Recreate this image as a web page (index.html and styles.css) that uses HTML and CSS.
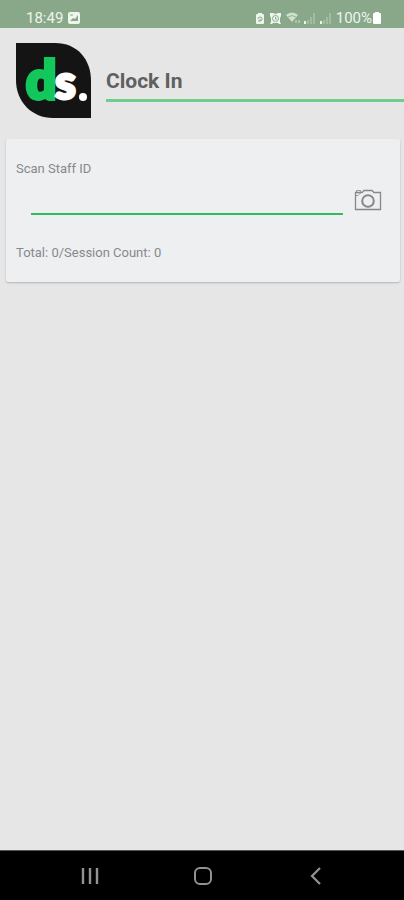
FILE: index.html
```html
<!DOCTYPE html>
<html lang="en">
<head>
<meta charset="utf-8">
<meta name="viewport" content="width=device-width, initial-scale=1">
<title>Clock In</title>
<link rel="stylesheet" href="styles.css">
</head>
<body>
<div class="status">
  <div class="status-group">
    <span>18:49</span>
    <svg width="12" height="12" viewBox="0 0 12 12" aria-hidden="true"><rect width="12" height="12" rx="2" fill="#edf5ed"/><path d="M2 9l3-3 2 1 3-4v6z" fill="#89a889"/><path d="M2 3h3" stroke="#89a889"/></svg>
  </div>
  <div class="status-group status-right">
    <svg width="10" height="13" viewBox="0 0 10 13" aria-hidden="true"><path d="M3 1h4v1h1q1 0 1 1v8q0 1-1 1H2q-1 0-1-1V3q0-1 1-1h1z" fill="#edf5ed"/><path d="M3 7a2 2 0 1 1 2 2M3 9h2V7" fill="none" stroke="#89a889"/></svg>
    <svg width="13" height="13" viewBox="0 0 13 13" aria-hidden="true"><path d="M1 1h3l2.500 1L9 1h3v3l-1 2v4l1 2h-2l-1-1H4l-1 1H1l1-2V6L1 4z" fill="#edf5ed"/><circle cx="6.500" cy="6.500" r="3" fill="none" stroke="#89a889"/><path d="M6.500 5v2H8" fill="none" stroke="#89a889"/></svg>
    <svg width="14" height="12" viewBox="0 0 14 12" aria-hidden="true"><path d="M0 3q6-5 12 0L6 10z" fill="#cfe0cf"/><path d="M2 5q4-3 8 0" fill="none" stroke="#89a889" stroke-width=".8"/><path d="M10 11V8M13 11V8" stroke="#cfe0cf"/></svg>
    <svg width="12" height="12" viewBox="0 0 12 12" aria-hidden="true"><path d="M4 12V8M7 12V5M10 12V1" stroke="#a1bda1" stroke-width="2"/><path d="M1 12V9" stroke="#edf5ed" stroke-width="2"/></svg>
    <svg width="12" height="12" viewBox="0 0 12 12" aria-hidden="true"><path d="M4 12V8M7 12V5M10 12V1" stroke="#a1bda1" stroke-width="2"/><path d="M1 12V9" stroke="#edf5ed" stroke-width="2"/></svg>
    <span class="percent">100%</span>
    <svg width="8" height="12" viewBox="0 0 8 12" aria-hidden="true"><path d="M2 0h4v1h1q1 0 1 1v9q0 1-1 1H1q-1 0-1-1V2q0-1 1-1h1z" fill="#fff"/></svg>
  </div>
</div>
<header class="header">
  <svg class="logo" width="75" height="75" viewBox="0 0 75 75" role="img" aria-label="ds.">
    <path d="M0 0H39C61 0 75 16 75 38V75H37C16 75 0 59 0 37Z" fill="#141414"/>
    <text class="logo-d" x="10" y="56">d</text>
    <text class="logo-s" x="39" y="56">s</text>
    <circle cx="67" cy="54" r="4" fill="#fff"/>
  </svg>
  <h1 class="title">Clock In</h1>
</header>
<main class="main">
  <form class="card">
    <label for="staff">Scan Staff ID</label>
    <div class="scan">
      <input id="staff" type="text" autocomplete="off">
      <button type="button" class="camera" aria-label="Scan with camera">
        <svg width="28" height="24" viewBox="0 0 28 24" fill="none" stroke="#858789" aria-hidden="true"><path d="M1.500 4.500H8L10 2.500H18L20 4.500H26.500V21.500H1.500Z" stroke-width="1.300"/><path d="M2.500 4.500V2.500H6.500V4.500M2 7.500H4L7 4.500" stroke-width=".8"/><circle cx="14" cy="13" r="5.800" stroke-width="2"/></svg>
      </button>
    </div>
    <p class="total">Total: 0/Session Count: 0</p>
  </form>
</main>
<nav class="nav" aria-label="System navigation">
  <button type="button" aria-label="Recent apps"><svg width="20" height="20" viewBox="0 0 20 20"><path d="M3 2V18M10 2V18M17 2V18" stroke="#929292" stroke-width="2.400"/></svg></button>
  <button type="button" aria-label="Home"><svg width="20" height="20" viewBox="0 0 20 20"><rect x="2" y="2" width="16" height="16" rx="5" fill="none" stroke="#929292" stroke-width="2"/></svg></button>
  <button type="button" aria-label="Back"><svg width="20" height="20" viewBox="0 0 20 20"><path d="M14 2L6 10L14 18" fill="none" stroke="#929292" stroke-width="2.200"/></svg></button>
</nav>
</body>
</html>
```
FILE: styles.css
```css
* {
  box-sizing: border-box;
}

body {
  margin: 0;
  min-height: 100vh;
  display: flex;
  flex-direction: column;
  background: #e6e6e6;
  color: #87898b;
  font: 13px/16px Roboto, sans-serif;
}

button {
  display: flex;
  align-items: center;
  justify-content: center;
  padding: 0;
  border: 0;
  background: none;
}

.status {
  display: flex;
  justify-content: space-between;
  height: 28px;
  padding: 8px 23px 0 26px;
  background: #89a889;
  color: #edf5ed;
  font-size: 15px;
  line-height: 20px;
}

.status-group {
  display: flex;
  align-items: center;
  gap: 5px;
}

.status-right {
  gap: 4px;
}

.percent {
  margin-right: -3px;
}

.header {
  display: flex;
  gap: 15px;
  padding: 15px 0 0 16px;
}

.logo {
  flex: none;
}

.logo-d,
.logo-s {
  font-family: Lato, sans-serif;
  font-weight: 900;
  stroke-linejoin: miter;
}

.logo-d {
  font-size: 53px;
  fill: #12c75b;
  stroke: #12c75b;
  stroke-width: 4px;
}

.logo-s {
  font-size: 47px;
  fill: #fff;
  stroke: #fff;
  stroke-width: 3px;
}

.title {
  flex: 1;
  align-self: flex-start;
  height: 59px;
  margin: 0;
  padding-top: 26px;
  border-bottom: 3px solid #70ce8c;
  color: #606060;
  font-size: 21px;
  line-height: 24px;
  font-weight: 700;
}

.main {
  flex: 1;
  padding: 21px 4px 16px 6px;
}

.card {
  display: flex;
  flex-direction: column;
  padding: 22px 17px 21px 10px;
  border-radius: 2px;
  background: #eeeff1;
  box-shadow: 0 1px 2px #b4b4b4;
}

.scan {
  display: flex;
  align-items: flex-end;
  gap: 10px;
  padding-left: 15px;
}

.scan input {
  flex: 1;
  min-width: 0;
  height: 38px;
  padding: 0 4px;
  border: 0;
  border-bottom: 2px solid #30bd60;
  outline: 0;
  background: none;
  color: #606060;
  font: inherit;
}

.camera {
  width: 30px;
  height: 28px;
  margin-bottom: 1px;
}

.total {
  margin: 30px 0 0;
}

.nav {
  display: grid;
  grid-template-columns: repeat(3, 1fr);
  height: 50px;
  padding: 0 32px 0 34px;
  border-top: 1px solid #555;
  background: #000;
}
```
